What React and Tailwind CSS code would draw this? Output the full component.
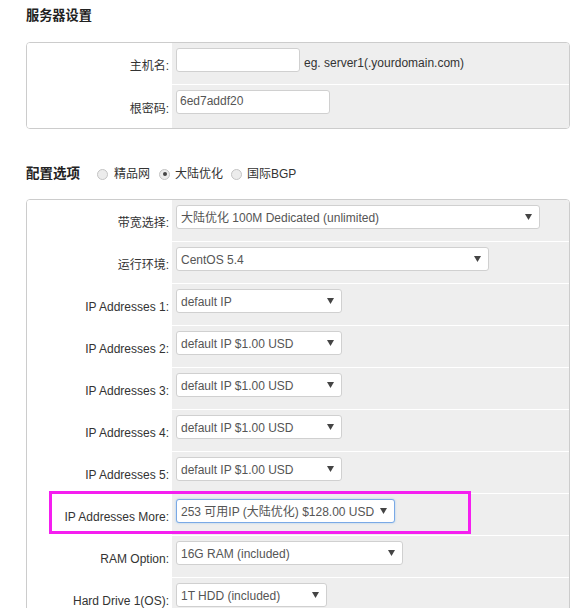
import React from "react";

const FONT = { fontFamily: '"Liberation Sans", Arial, "Noto Sans CJK SC", sans-serif' };

function Arrow() {
  return (
    <svg width="7" height="6" viewBox="0 0 7 6" className="shrink-0">
      <path d="M0 0 H7 L3.5 6 Z" fill="#444" />
    </svg>
  );
}

function Select({ w, text, focus }) {
  return (
    <div
      className={
        "h-[24px] rounded-[3px] bg-white flex items-center justify-between pl-[4px] pr-[7px] text-[12px] text-[#555] whitespace-nowrap " +
        (focus ? "border border-[#7aa9e6] shadow-[0_0_2px_rgba(102,175,233,0.6)]" : "border border-[#d0d0d0]")
      }
      style={{ width: w }}
    >
      <span className="pt-[1px]">{text}</span>
      <Arrow />
    </div>
  );
}

function Row({ label, children, last, highlight }) {
  return (
    <div className={"relative flex " + (last ? "h-[43px]" : "h-[42px] border-b border-white")}>
      <div className="w-[145px] bg-white flex items-center justify-end pr-[3px] pt-[4px] text-[12px] text-[#333] whitespace-nowrap">
        {label}
      </div>
      <div className="flex-1 bg-[#eeeeee] pl-[4px] pt-[5px] flex items-start">{children}</div>
      {highlight && (
        <div className="absolute left-[22px] top-[-3px] w-[422px] h-[43px] border-[3px] border-[#f51ef0] pointer-events-none" />
      )}
    </div>
  );
}

function Radio({ checked }) {
  return (
    <span className="w-[11px] h-[11px] rounded-full border border-[#c4c4c4] bg-[#ececec] flex items-center justify-center shrink-0">
      {checked && <span className="w-[4px] h-[4px] rounded-full bg-[#444]" />}
    </span>
  );
}

export default function App() {
  return (
    <div className="w-[579px] h-[608px] overflow-hidden bg-white text-[#333]" style={FONT}>
      <div className="pl-[26px] pr-[9px]">
        <div className="pt-[7px] h-[25px] text-[13.2px] font-bold leading-[18px] text-[#222]">服务器设置</div>

        <div className="mt-[17px] border border-[#cccccc] rounded-[4px] overflow-hidden">
          <Row label="主机名:">
            <div className="w-[124px] h-[24px] bg-white border border-[#d0d0d0] rounded-[3px]" />
            <span className="ml-[4px] mt-[8px] text-[12px] leading-[14px] text-[#333]">eg. server1(.yourdomain.com)</span>
          </Row>
          <Row label="根密码:" last>
            <div className="w-[154px] h-[24px] bg-white border border-[#d0d0d0] rounded-[3px] pl-[3px] text-[12px] text-[#555] leading-[21px]">
              6ed7addf20
            </div>
          </Row>
        </div>

        <div className="mt-[36px] h-[18px] flex items-center text-[12px]">
          <span className="text-[13.5px] font-bold text-[#222] leading-[18px]">配置选项</span>
          <span className="ml-[17px]"><Radio /></span>
          <span className="ml-[6px]">精品网</span>
          <span className="ml-[9px]"><Radio checked /></span>
          <span className="ml-[5px]">大陆优化</span>
          <span className="ml-[8px]"><Radio /></span>
          <span className="ml-[5px]">国际BGP</span>
        </div>

        <div className="mt-[16px] border border-[#cccccc] rounded-t-[4px] overflow-hidden">
          <Row label="带宽选择:">
            <Select w={364} text="大陆优化 100M Dedicated (unlimited)" />
          </Row>
          <Row label="运行环境:">
            <Select w={313} text="CentOS 5.4" />
          </Row>
          <Row label="IP Addresses 1:">
            <Select w={166} text="default IP" />
          </Row>
          <Row label="IP Addresses 2:">
            <Select w={166} text="default IP $1.00 USD" />
          </Row>
          <Row label="IP Addresses 3:">
            <Select w={166} text="default IP $1.00 USD" />
          </Row>
          <Row label="IP Addresses 4:">
            <Select w={166} text="default IP $1.00 USD" />
          </Row>
          <Row label="IP Addresses 5:">
            <Select w={166} text="default IP $1.00 USD" />
          </Row>
          <Row label="IP Addresses More:" highlight>
            <Select w={219} text="253 可用IP (大陆优化) $128.00 USD" focus />
          </Row>
          <Row label="RAM Option:">
            <Select w={227} text="16G RAM (included)" />
          </Row>
          <Row label="Hard Drive 1(OS):">
            <Select w={151} text="1T HDD (included)" />
          </Row>
        </div>
      </div>
    </div>
  );
}
